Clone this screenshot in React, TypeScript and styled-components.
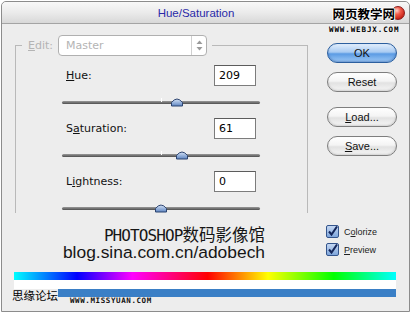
import styled, { createGlobalStyle } from 'styled-components';

const GlobalStyle = createGlobalStyle`
  html, body {
    margin: 0;
    padding: 0;
    background: #ffffff;
  }
  * {
    box-sizing: border-box;
  }
`;

const adjustments = [
  { label: 'Hue', pre: '', key: 'H', rest: 'ue:', value: '209', pos: 0.583 },
  { label: 'Saturation', pre: 'S', key: 'a', rest: 'turation:', value: '61', pos: 0.605 },
  { label: 'Lightness', pre: 'L', key: 'i', rest: 'ghtness:', value: '0', pos: 0.5 },
];

const App = () => {
  return (
    <>
      <GlobalStyle />
      <Window>
        <TitleBar>
          <Title>Hue/Saturation</Title>
          <CloseDot />
        </TitleBar>
        <Stamp>
          <StampBig>网页教学网</StampBig>
          <StampSmall>WWW.WEBJX.COM</StampSmall>
        </Stamp>

        <Body>
          <MainRow>
            <Group>
              <Legend>
                <EditLabel>
                  <u>E</u>dit:
                </EditLabel>
                <Select>
                  <span>Master</span>
                  <Arrows>
                    <svg width="7" height="11" viewBox="0 0 7 11">
                      <path d="M3.5 0.5 L6.5 4 L0.5 4 Z" fill="#9a9a9a" />
                      <path d="M3.5 10.5 L6.5 7 L0.5 7 Z" fill="#9a9a9a" />
                    </svg>
                  </Arrows>
                </Select>
              </Legend>
              <AdjustList>
                {adjustments.map((a) => (
                  <Adjust key={a.label}>
                    <InputRow>
                      <Label>
                        {a.pre}
                        <u>{a.key}</u>
                        {a.rest}
                      </Label>
                      <NumberBox>{a.value}</NumberBox>
                    </InputRow>
                    <Slider>
                      <Track />
                      <Tick />
                      <Thumb style={{ left: `${a.pos * 100}%` }}>
                        <svg width="12" height="10" viewBox="0 0 12 10">
                          <defs>
                            <linearGradient id={`g${a.label}`} x1="0" y1="0" x2="0" y2="1">
                              <stop offset="0" stopColor="#d4e2f6" />
                              <stop offset="1" stopColor="#5f86c2" />
                            </linearGradient>
                          </defs>
                          <path
                            d="M0.5 9 L0.5 5.5 Q6 -1.5 11.5 5.5 L11.5 9 Z"
                            fill={`url(#g${a.label})`}
                            stroke="#2d4470"
                            strokeWidth="1"
                          />
                        </svg>
                      </Thumb>
                    </Slider>
                  </Adjust>
                ))}
              </AdjustList>
            </Group>

            <ButtonColumn>
              <AquaButton $primary $gap={8}>OK</AquaButton>
              <AquaButton $gap={9}>Reset</AquaButton>
              <AquaButton $gap={15}>
                <u>L</u>oad...
              </AquaButton>
              <AquaButton $gap={9}>
                <u>S</u>ave...
              </AquaButton>
            </ButtonColumn>
          </MainRow>

          <BottomRow>
            <Watermark>
              <WmLine1>
                <Mono>PHOTOSHOP</Mono>数码影像馆
              </WmLine1>
              <WmLine2>blog.sina.com.cn/adobech</WmLine2>
            </Watermark>
            <CheckList>
              <CheckRow>
                <CheckBox>
                  <svg width="11" height="11" viewBox="0 0 11 11">
                    <path d="M2 5.5 L4.5 8.5 L10 0.5" fill="none" stroke="#14265a" strokeWidth="2" />
                  </svg>
                </CheckBox>
                <CheckText>
                  C<u>o</u>lorize
                </CheckText>
              </CheckRow>
              <CheckRow>
                <CheckBox>
                  <svg width="11" height="11" viewBox="0 0 11 11">
                    <path d="M2 5.5 L4.5 8.5 L10 0.5" fill="none" stroke="#14265a" strokeWidth="2" />
                  </svg>
                </CheckBox>
                <CheckText>
                  <u>P</u>review
                </CheckText>
              </CheckRow>
            </CheckList>
          </BottomRow>

          <Spectrum />
          <WhiteBar />
          <FooterRow>
            <ForumName>思缘论坛</ForumName>
            <FooterRight>
              <BlueBar />
              <ForumUrl>WWW.MISSYUAN.COM</ForumUrl>
            </FooterRight>
          </FooterRow>
        </Body>
      </Window>
    </>
  );
};

const Window = styled.div`
  position: relative;
  width: 409px;
  height: 311px;
  margin: 1px 0 0 1px;
  border: 1px solid #8c8c8c;
  border-radius: 5px 5px 0 0;
  background: #ededed;
  display: flex;
  flex-direction: column;
  overflow: hidden;
`;

const TitleBar = styled.div`
  position: relative;
  height: 22px;
  flex-shrink: 0;
  display: flex;
  align-items: center;
  justify-content: center;
  padding-right: 19px;
  background: linear-gradient(#f8f8f8, #ebebeb 50%, #d8d8d8);
  border-bottom: 1px solid #a4a4a4;
  border-radius: 4px 4px 0 0;
`;

const Title = styled.div`
  font-family: 'Liberation Sans', Arial, sans-serif;
  font-size: 11.5px;
  color: #2a2aa8;
`;

const CloseDot = styled.div`
  position: absolute;
  left: 389px;
  top: 4px;
  width: 14px;
  height: 14px;
  border-radius: 50%;
  border: 1px solid #8a1a1a;
  background: radial-gradient(circle at 40% 30%, #ffd0c8 0, #f05a4a 35%, #c21c12 80%);
`;

const Stamp = styled.div`
  position: absolute;
  left: 327px;
  top: 5px;
  display: flex;
  flex-direction: column;
  align-items: flex-end;
  width: 72px;
`;

const StampBig = styled.div`
  font-family: 'Noto Sans CJK SC', sans-serif;
  font-size: 12.5px;
  font-weight: 700;
  line-height: 14px;
  color: #000;
  margin-right: 6px;
  text-shadow: 1px 0 0 #fff, -1px 0 0 #fff, 0 1px 0 #fff, 0 -1px 0 #fff;
`;

const StampSmall = styled.div`
  margin-top: 5px;
  font-family: 'DejaVu Sans Mono', monospace;
  font-size: 7.5px;
  font-weight: 700;
  line-height: 8px;
  letter-spacing: 0.9px;
  color: #000;
  align-self: flex-start;
`;

const Body = styled.div`
  flex: 1;
  display: flex;
  flex-direction: column;
  padding-top: 11px;
`;

const MainRow = styled.div`
  display: flex;
  gap: 19px;
  margin-left: 13px;
`;

const Group = styled.fieldset`
  width: 293px;
  height: 178px;
  margin: 0;
  padding: 0;
  min-width: 0;
  border: 1px solid #b9b9b9;
  border-bottom: none;
`;

const Legend = styled.legend`
  margin-left: 6px;
  padding: 0 5px 0 6px;
  display: flex;
  align-items: center;
  gap: 5px;
  height: 21px;
`;

const EditLabel = styled.span`
  font-family: 'DejaVu Sans', sans-serif;
  font-size: 11px;
  color: #b4b4b4;
`;

const Select = styled.div`
  width: 149px;
  height: 21px;
  display: flex;
  align-items: center;
  justify-content: space-between;
  padding-left: 7px;
  background: #fff;
  border: 1px solid #b0b0b0;
  border-radius: 4px;
  font-family: 'DejaVu Sans', sans-serif;
  font-size: 11px;
  color: #b4b4b4;
`;

const Arrows = styled.div`
  width: 15px;
  height: 100%;
  display: flex;
  align-items: center;
  justify-content: center;
  border-left: 1px solid #d0d0d0;
`;

const AdjustList = styled.div`
  display: flex;
  flex-direction: column;
  gap: 8px;
  padding-top: 9px;
  margin-left: 46px;
  width: 198px;
`;

const Adjust = styled.div`
  display: flex;
  flex-direction: column;
`;

const InputRow = styled.div`
  height: 21px;
  display: flex;
  align-items: center;
  justify-content: space-between;
`;

const Label = styled.span`
  margin-left: 4px;
  font-family: 'DejaVu Sans', sans-serif;
  font-size: 11px;
  color: #111;
`;

const NumberBox = styled.div`
  width: 42px;
  height: 21px;
  margin-right: 4px;
  padding-left: 4px;
  display: flex;
  align-items: center;
  background: #fff;
  border: 1px solid #7c7c7c;
  border-top-color: #5c5c5c;
  font-family: 'DejaVu Sans', sans-serif;
  font-size: 11px;
  color: #000;
`;

const Slider = styled.div`
  position: relative;
  height: 16px;
  margin-top: 8px;
  display: flex;
  align-items: center;
`;

const Track = styled.div`
  width: 100%;
  height: 3px;
  border-radius: 2px;
  background: linear-gradient(#9a9a9a, #4e4e4e);
`;

const Tick = styled.div`
  position: absolute;
  left: 50%;
  top: 4px;
  width: 1px;
  height: 4px;
  background: #ffffff;
`;

const Thumb = styled.div`
  position: absolute;
  top: 3px;
  width: 12px;
  height: 10px;
  margin-left: -6px;
  display: flex;
`;

const ButtonColumn = styled.div`
  display: flex;
  flex-direction: column;
`;

const AquaButton = styled.div<{ $primary?: boolean; $gap: number }>`
  width: 70px;
  height: 20px;
  margin-top: ${(p) => p.$gap}px;
  border-radius: 10px;
  display: flex;
  align-items: center;
  justify-content: center;
  font-family: 'Liberation Sans', Arial, sans-serif;
  font-size: 11px;
  color: #111;
  border: 1px solid ${(p) => (p.$primary ? '#2c5f9e' : '#7e7e7e')};
  background: ${(p) =>
    p.$primary
      ? 'linear-gradient(#e2eefc, #a9cbf2 45%, #5b9be4 55%, #9fcaf6)'
      : 'linear-gradient(#ffffff, #f4f4f4 45%, #e2e2e2 55%, #f6f6f6)'};
  box-shadow: inset 0 -1px 2px ${(p) => (p.$primary ? 'rgba(30,70,140,0.4)' : 'rgba(0,0,0,0.15)')};
`;

const BottomRow = styled.div`
  height: 59px;
  display: flex;
  align-items: flex-start;
`;

const Watermark = styled.div`
  width: 263px;
  padding-top: 12px;
  text-align: right;
  color: #161616;
`;

const WmLine1 = styled.div`
  font-family: 'Noto Sans CJK SC', sans-serif;
  font-size: 16.5px;
  line-height: 18px;
  height: 18px;
`;

const Mono = styled.span`
  font-family: 'DejaVu Sans Mono', monospace;
  font-size: 16px;
  letter-spacing: -0.9px;
`;

const WmLine2 = styled.div`
  font-family: 'Liberation Sans', Arial, sans-serif;
  font-size: 17.4px;
  line-height: 19px;
`;

const CheckList = styled.div`
  margin-left: 61px;
  padding-top: 12px;
  display: flex;
  flex-direction: column;
  gap: 5px;
`;

const CheckRow = styled.div`
  display: flex;
  align-items: center;
  gap: 5px;
  height: 13px;
`;

const CheckBox = styled.div`
  width: 13px;
  height: 13px;
  border: 1px solid #33548c;
  border-radius: 2px;
  background: linear-gradient(#c4d7f2, #7ea5db);
  display: flex;
  align-items: center;
  justify-content: center;
`;

const CheckText = styled.span`
  font-family: 'Liberation Sans', Arial, sans-serif;
  font-size: 9px;
  color: #222;
`;

const Spectrum = styled.div`
  margin-left: 12px;
  width: 382px;
  height: 8px;
  background: linear-gradient(
    to right,
    #00ffff 0%,
    #0000ff 16.5%,
    #ff00ff 31%,
    #ff0000 50.7%,
    #ffff00 66.5%,
    #00ff00 83.7%,
    #00ffff 100%
  );
`;

const WhiteBar = styled.div`
  margin-left: 12px;
  width: 382px;
  height: 9px;
  background: #ffffff;
`;

const FooterRow = styled.div`
  display: flex;
  align-items: flex-start;
`;

const ForumName = styled.div`
  width: 56px;
  padding-left: 10px;
  margin-top: -1px;
  font-family: 'Noto Sans CJK SC', sans-serif;
  font-size: 11.5px;
  line-height: 15px;
  color: #000;
  white-space: nowrap;
`;

const FooterRight = styled.div`
  display: flex;
  flex-direction: column;
`;

const BlueBar = styled.div`
  width: 338px;
  height: 8px;
  background: #3a7fc6;
`;

const ForumUrl = styled.div`
  margin-left: 12px;
  font-family: 'DejaVu Sans Mono', monospace;
  font-size: 7.5px;
  font-weight: 700;
  line-height: 7px;
  letter-spacing: 0.6px;
  color: #111;
`;

export default App;
